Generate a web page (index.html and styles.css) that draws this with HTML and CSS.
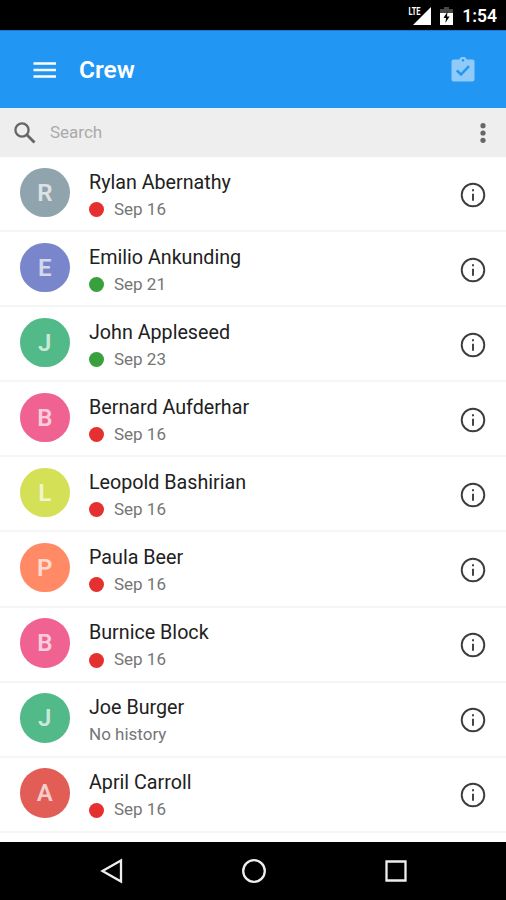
FILE: index.html
```html
<!DOCTYPE html>
<html lang="en">
<head>
  <meta charset="UTF-8" />
  <meta name="viewport" content="width=device-width, initial-scale=1.0"/>
  <title>Crew</title>
  <link rel="stylesheet" href="styles.css">
</head>
<body>
  <svg width="0" height="0" class="defs">
    <symbol id="info" viewBox="0 0 26 26">
      <circle cx="13" cy="13" r="11.3" fill="none" stroke="#3c3c3c" stroke-width="1.9"/>
      <path d="M12 7.200h2v2h-2zM12 11.800h2v7h-2z" fill="#444"/>
    </symbol>
  </svg>

  <div class="status-bar">
    <svg class="signal" width="26" height="28" viewBox="0 0 26 28">
      <path d="M25 6v18H7z" fill="#fff"/>
      <path d="M0 4h15.500v10H0z" fill="#000"/>
      <text x="2.500" y="13.500" textLength="12" lengthAdjust="spacingAndGlyphs" class="lte">LTE</text>
    </svg>
    <svg class="battery" width="13" height="20" viewBox="0 0 13 20">
      <path d="M4 1h5v2h4v4H0V3h4z" fill="#484848"/>
      <path d="M0 7h13v12H0z" fill="#fff"/>
      <path d="M7.500 5.500L3.500 12h2.600L5.300 17 9.600 10.500H7z" fill="#000"/>
    </svg>
    <span class="time">1:54</span>
  </div>

  <div class="app-bar">
    <svg class="menu" width="23" height="16" viewBox="0 0 23 16">
      <path d="M0.500 1.500h22.500M0.500 8h22.500M0.500 14.500h22.500" stroke="#fff" stroke-width="2.500"/>
    </svg>
    <h1>Crew</h1>
    <svg class="clipboard" width="24" height="26" viewBox="0 0 24 26">
      <path fill-rule="evenodd" d="M2.500 2.500H8.200a4 4 0 0 1 7.600 0H21.500a2 2 0 0 1 2 2V22.500a2 2 0 0 1-2 2H2.500a2 2 0 0 1-2-2V4.500a2 2 0 0 1 2-2zM12 2a1.300 1.300 0 1 0 .01 0z" fill="#90caf9"/>
      <path d="M5.800 13.300l4.200 4.200 8-8.300" fill="none" stroke="#2196f3" stroke-width="2.500"/>
    </svg>
  </div>

  <div class="search-bar">
    <svg class="search-icon" width="22" height="22" viewBox="0 0 22 22">
      <circle cx="8" cy="8" r="6.600" fill="none" stroke="#666" stroke-width="2.300"/>
      <path d="M12.800 12.800l7.700 7.700" stroke="#666" stroke-width="2.800"/>
    </svg>
    <span class="placeholder">Search</span>
    <svg class="more" width="6" height="20" viewBox="0 0 6 20">
      <circle cx="3" cy="2.700" r="2.600"/>
      <circle cx="3" cy="10" r="2.600"/>
      <circle cx="3" cy="17.300" r="2.600"/>
    </svg>
  </div>

  <div class="list">
    <div class="row">
      <div class="avatar gray">R</div>
      <div class="text">
        <div class="name">Rylan Abernathy</div>
        <div class="date"><span class="dot red"></span>Sep 16</div>
      </div>
      <svg class="info"><use href="#info"/></svg>
    </div>
    <div class="row">
      <div class="avatar indigo">E</div>
      <div class="text">
        <div class="name">Emilio Ankunding</div>
        <div class="date"><span class="dot green"></span>Sep 21</div>
      </div>
      <svg class="info"><use href="#info"/></svg>
    </div>
    <div class="row">
      <div class="avatar teal">J</div>
      <div class="text">
        <div class="name">John Appleseed</div>
        <div class="date"><span class="dot green"></span>Sep 23</div>
      </div>
      <svg class="info"><use href="#info"/></svg>
    </div>
    <div class="row">
      <div class="avatar pink">B</div>
      <div class="text">
        <div class="name">Bernard Aufderhar</div>
        <div class="date"><span class="dot red"></span>Sep 16</div>
      </div>
      <svg class="info"><use href="#info"/></svg>
    </div>
    <div class="row">
      <div class="avatar lime">L</div>
      <div class="text">
        <div class="name">Leopold Bashirian</div>
        <div class="date"><span class="dot red"></span>Sep 16</div>
      </div>
      <svg class="info"><use href="#info"/></svg>
    </div>
    <div class="row">
      <div class="avatar orange">P</div>
      <div class="text">
        <div class="name">Paula Beer</div>
        <div class="date"><span class="dot red"></span>Sep 16</div>
      </div>
      <svg class="info"><use href="#info"/></svg>
    </div>
    <div class="row">
      <div class="avatar pink">B</div>
      <div class="text">
        <div class="name">Burnice Block</div>
        <div class="date"><span class="dot red"></span>Sep 16</div>
      </div>
      <svg class="info"><use href="#info"/></svg>
    </div>
    <div class="row">
      <div class="avatar teal">J</div>
      <div class="text">
        <div class="name">Joe Burger</div>
        <div class="date">No history</div>
      </div>
      <svg class="info"><use href="#info"/></svg>
    </div>
    <div class="row">
      <div class="avatar coral">A</div>
      <div class="text">
        <div class="name">April Carroll</div>
        <div class="date"><span class="dot red"></span>Sep 16</div>
      </div>
      <svg class="info"><use href="#info"/></svg>
    </div>
  </div>

  <div class="nav-bar">
    <svg width="24" height="26" viewBox="0 0 24 26">
      <path d="M2.500 13L21 2.500v21z"/>
    </svg>
    <svg width="24" height="26" viewBox="0 0 24 26">
      <circle cx="12" cy="13" r="10.800"/>
    </svg>
    <svg width="24" height="26" viewBox="0 0 24 26">
      <path d="M2.500 3.500h19v19h-19z"/>
    </svg>
  </div>
</body>
</html>
```

FILE: styles.css
```css
body {
  margin: 0;
  height: 900px;
  display: flex;
  flex-direction: column;
  overflow: hidden;
  background: white;
  font-family: Roboto, "Liberation Sans", sans-serif;
}

svg {
  display: block;
  flex-shrink: 0;
}

.defs {
  position: absolute;
}

.status-bar {
  display: flex;
  align-items: center;
  justify-content: flex-end;
  box-sizing: border-box;
  height: 30px;
  padding-right: 9px;
  background: black;
  color: white;
}

.lte {
  font-size: 11px;
  font-weight: bold;
  fill: white;
}

.battery {
  margin: 1px 9px 0 8px;
}

.time {
  font-size: 17.5px;
  font-weight: 600;
  line-height: 30px;
  padding-top: 2px;
}

.app-bar {
  display: flex;
  align-items: center;
  box-sizing: border-box;
  height: 78px;
  padding: 0 31px 0 33px;
  background: #2196f3;
  border-top: 1px solid #1976d2;
}

h1 {
  flex: 1;
  margin: 0 0 0 23px;
  color: white;
  font-size: 24.5px;
  font-weight: 600;
  line-height: 30px;
}

.search-bar {
  display: flex;
  align-items: center;
  height: 49px;
  padding: 0 20px 0 14px;
  background: #eee;
}

.placeholder {
  flex: 1;
  margin: 0 0 2px 14px;
  color: #aaa;
  font-size: 17px;
}

.more {
  fill: #666;
}

.row {
  display: flex;
  align-items: flex-start;
  box-sizing: border-box;
  height: 75.1px;
  padding: 10.5px 20px 0;
  border-bottom: 2px solid #f6f6f6;
}

.avatar {
  width: 49.5px;
  height: 49.5px;
  border-radius: 50%;
  color: rgba(255, 255, 255, 0.7);
  font-size: 24px;
  font-weight: 600;
  line-height: 51px;
  text-align: center;
}

.gray { background: #90a4ae; }
.indigo { background: #7986cb; }
.teal { background: #52ba89; }
.pink { background: #f06292; }
.lime { background: #d4e157; }
.orange { background: #ff8a65; }
.coral { background: #e25d55; }

.text {
  flex: 1;
  margin-left: 19.5px;
}

.name {
  color: #212121;
  font-size: 19.7px;
  line-height: 29px;
}

.date {
  display: flex;
  align-items: center;
  color: #757575;
  font-size: 17px;
  line-height: 25px;
}

.dot {
  width: 15px;
  height: 15px;
  margin: 1px 10px 0 0;
  border-radius: 50%;
}

.red { background: #e53030; }
.green { background: #39a03e; }

.info {
  width: 26px;
  height: 26px;
  margin-top: 14px;
}

.nav-bar {
  display: flex;
  align-items: center;
  justify-content: space-between;
  box-sizing: border-box;
  height: 58px;
  margin-top: auto;
  padding: 0 98px 0 100px;
  background: black;
}

.nav-bar svg {
  fill: none;
  stroke: #eee;
  stroke-width: 2.3;
}
```
